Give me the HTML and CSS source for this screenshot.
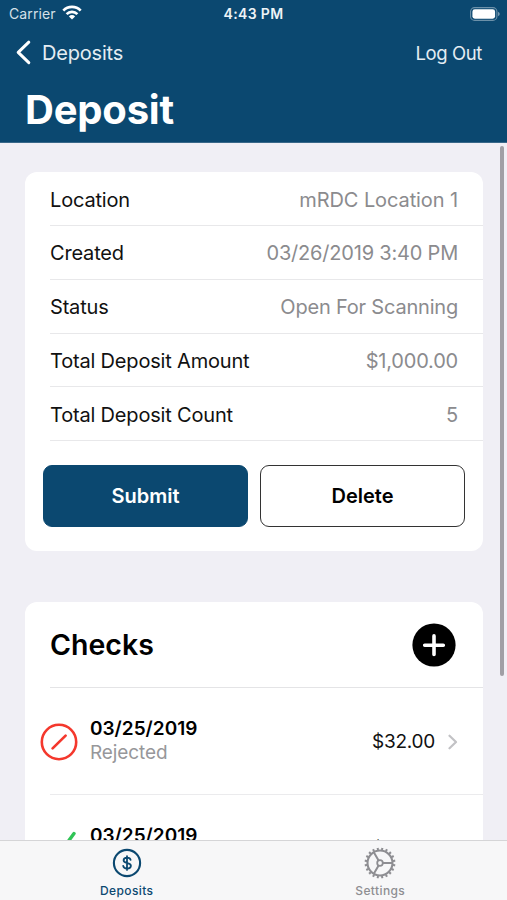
FILE: index.html
```html
<!DOCTYPE html>
<html lang="en">
<head>
<meta charset="utf-8">
<title>Deposit</title>
<link rel="stylesheet" href="styles.css">
</head>
<body>
<div class="app">
  <header class="header">
    <div class="status">
      <div class="status-left"><span class="carrier">Carrier</span>
        <svg class="wifi" width="20" height="15" viewBox="0 0 20 15" fill="none" stroke="#fff" stroke-width="2.7"><path d="M1.3 5.6a12.2 12.2 0 0 1 17.4 0M4.6 9.1a7.6 7.6 0 0 1 10.8 0"/><path d="M10 14.4l-3.1-3a4.3 4.3 0 0 1 6.2 0z" fill="#fff" stroke="none"/></svg>
      </div>
      <span class="time">4:43 PM</span>
      <svg class="battery" width="30" height="14" viewBox="0 0 30 14"><rect x=".6" y=".6" width="26.3" height="12.8" rx="4" fill="none" stroke="#fff" stroke-opacity=".4" stroke-width="1.1"/><rect x="2.4" y="2.3" width="22.7" height="9.4" rx="2.4" fill="#fff"/><path d="M28.1 4.8q1.6.7 1.6 2.2t-1.6 2.2z" fill="#fff" fill-opacity=".5"/></svg>
    </div>
    <nav class="nav">
      <a class="back"><svg width="15" height="25" viewBox="0 0 15 25" fill="none" stroke="#fff" stroke-width="3" stroke-linecap="round" stroke-linejoin="round"><path d="M12.8 2.2L2.2 12.4 12.8 22.6"/></svg><span class="back-text">Deposits</span></a>
      <a class="logout">Log Out</a>
    </nav>
    <h1 class="title">Deposit</h1>
  </header>
  <main class="content">
    <section class="card details">
      <dl class="rows">
        <div class="row"><dt>Location</dt><dd class="wide">mRDC Location 1</dd></div>
        <div class="row"><dt>Created</dt><dd>03/26/2019 3:40 PM</dd></div>
        <div class="row"><dt>Status</dt><dd>Open For Scanning</dd></div>
        <div class="row"><dt>Total Deposit Amount</dt><dd>$1,000.00</dd></div>
        <div class="row"><dt>Total Deposit Count</dt><dd>5</dd></div>
      </dl>
      <div class="actions">
        <button class="btn primary">Submit</button>
        <button class="btn">Delete</button>
      </div>
    </section>
    <section class="card checks">
      <div class="checks-head">
        <h2>Checks</h2>
        <svg width="44" height="44" viewBox="0 0 44 44"><circle cx="22" cy="22" r="21.6"/><path d="M22 12.9v18.6M12.7 22.2h18.6" stroke="#fff" stroke-width="3.6" stroke-linecap="round"/></svg>
      </div>
      <div class="check">
        <svg class="state" width="38" height="38" viewBox="0 0 38 38" fill="none" stroke="#f4382d" stroke-linecap="round"><circle cx="19" cy="19" r="17.2" stroke-width="2.6"/><path d="M12.6 25.4L25.6 12.6" stroke-width="2.7"/></svg>
        <div class="info"><span class="date">03/25/2019</span><span class="sub">Rejected</span></div>
        <span class="amount">$32.00</span>
        <svg class="chev" width="10" height="16" viewBox="0 0 10 16" fill="none" stroke="#c2c2c5" stroke-width="2.2" stroke-linecap="round" stroke-linejoin="round"><path d="M1.5 1.7L8 8 1.5 14.3"/></svg>
      </div>
      <div class="check">
        <svg class="state" width="38" height="38" viewBox="0 0 38 38" fill="none" stroke="#30c456" stroke-width="3.4" stroke-linecap="round" stroke-linejoin="round"><path d="M14 31l-7-9M14 31L34 3.5"/></svg>
        <div class="info"><span class="date">03/25/2019</span></div>
        <span class="amount">$32.00</span>
      </div>
    </section>
    <div class="scrollbar"></div>
  </main>
  <footer class="tabs">
    <a class="tab active">
      <svg width="32" height="32" viewBox="0 0 32 32"><circle cx="16" cy="16" r="13.1" fill="none" stroke="#0b4870" stroke-width="2.1"/><path d="M16 9.1v13.8M19.6 12.9c-.3-1.5-1.7-2.3-3.5-2.3-2.1 0-3.5 1-3.5 2.6 0 1.5 1.1 2.1 3.4 2.6 2.6.6 3.9 1.3 3.9 3 0 1.7-1.6 2.7-3.8 2.7-2.1 0-3.6-.9-3.9-2.6" fill="none" stroke="#0b4870" stroke-width="1.8" stroke-linecap="round"/></svg>
      <span>Deposits</span>
    </a>
    <a class="tab">
      <svg width="32" height="32" viewBox="0 0 32 32" fill="none" stroke="#8e8e92"><circle cx="16" cy="16" r="14.2" stroke-width="2.4" pathLength="80" stroke-dasharray="1.8 2.2" stroke-dashoffset="-1.1"/><circle cx="16" cy="16" r="12.5" stroke-width="2.1"/><circle cx="16" cy="16" r="2.8" stroke-width="1.8"/><path d="M18.8 16H28M14.6 13.6L9.8 5.3M14.6 18.4L9.8 26.7" stroke-width="2"/></svg>
      <span>Settings</span>
    </a>
  </footer>
</div>
</body>
</html>
```
FILE: styles.css
```css
* { box-sizing: border-box; }
body { margin: 0; font-family: Inter, "Liberation Sans", sans-serif; color: #111; }
.app { display: flex; flex-direction: column; width: 507px; height: 900px; overflow: hidden; background: #f0eff5; }
.header { flex: none; height: 143px; background: #0b4870; color: #fff; border-bottom: 1px solid #396889; }
.status { display: grid; grid-template-columns: 1fr auto 1fr; align-items: center; height: 27px; padding: 0 7px 0 9px; font-size: 14px; }
.status-left { display: flex; align-items: center; gap: 6px; color: #d5e0e8; }
.carrier { letter-spacing: 0.1px; }
.wifi { margin-top: -2px; }
.time { position: relative; left: -1px; color: #edf3f7; font-weight: 600; font-size: 14px; letter-spacing: 0.35px; }
.battery { justify-self: end; }
.nav { display: flex; justify-content: space-between; align-items: center; height: 50px; padding: 1px 25px 0 16px; font-size: 20px; color: #e4edf3; }
.back { display: flex; align-items: center; gap: 11px; }
.back-text { letter-spacing: -0.2px; }
.logout { font-size: 18.5px; letter-spacing: -0.4px; }
.title { margin: 0; padding-left: 25px; font-size: 40px; line-height: 65px; font-weight: 700; letter-spacing: -0.2px; }
.content { position: relative; flex: 1; min-height: 0; overflow: hidden; padding: 29px 24px 0 25px; }
.card { background: #fff; border-radius: 12px; overflow: hidden; }
.details { height: 379px; }
.rows { margin: 0; padding-left: 25px; }
.row { display: flex; justify-content: space-between; align-items: center; height: 53.8px; padding: 2px 25px 0 0; border-bottom: 1px solid #e8e8ea; font-size: 20px; white-space: nowrap; }
.row:first-child { height: 54px; }
.row dt { letter-spacing: -0.18px; }
.row dd { margin: 0; color: #8b8b8e; letter-spacing: -0.2px; }
.row .wide { letter-spacing: -0.1px; }
.actions { display: flex; gap: 12px; padding: 24px 18px 0; }
.btn { flex: 1; height: 62px; border: 1.5px solid #333; border-radius: 9px; background: #fff; color: #000; font: 600 20px Inter, sans-serif; letter-spacing: 0; }
.primary { background: #0b4870; border-color: #0b4870; color: #fff; }
.checks { margin-top: 51px; }
.checks-head { display: flex; align-items: center; justify-content: space-between; height: 86px; margin-left: 25px; padding-right: 27px; border-bottom: 1px solid #e4e4e6; }
.checks-head h2 { margin: 0; color: #000; font-size: 28.5px; font-weight: 600; }
.check { position: relative; display: flex; align-items: center; height: 107px; padding: 0 25px 0 15px; }
.check::after { content: ""; position: absolute; left: 25px; right: 0; bottom: 0; border-bottom: 1px solid #ebebed; }
.info { display: flex; flex-direction: column; flex: 1; height: 50px; margin-left: 12px; line-height: 24px; }
.date { color: #000; font-size: 19px; font-weight: 600; }
.sub { color: #97979a; font-size: 19px; letter-spacing: -0.1px; }
.amount { font-size: 19px; color: #111; letter-spacing: -0.25px; }
.chev { margin-left: 13px; }
.check:last-child .amount { margin-right: 23px; }
.scrollbar { position: absolute; top: 3px; right: 3px; width: 4px; height: 530px; border-radius: 2px; background: #a09fa5; }
.tabs { display: flex; flex: none; height: 60px; border-top: 1px solid #d5d5d7; background: #f7f7f8; }
.tab { flex: 1; display: flex; flex-direction: column; align-items: center; padding-top: 6px; color: #8e8e92; font-size: 12px; font-weight: 500; line-height: 15px; letter-spacing: 0.4px; }
.tab span { margin-top: 4px; }
.active { color: #0b4870; }
```
